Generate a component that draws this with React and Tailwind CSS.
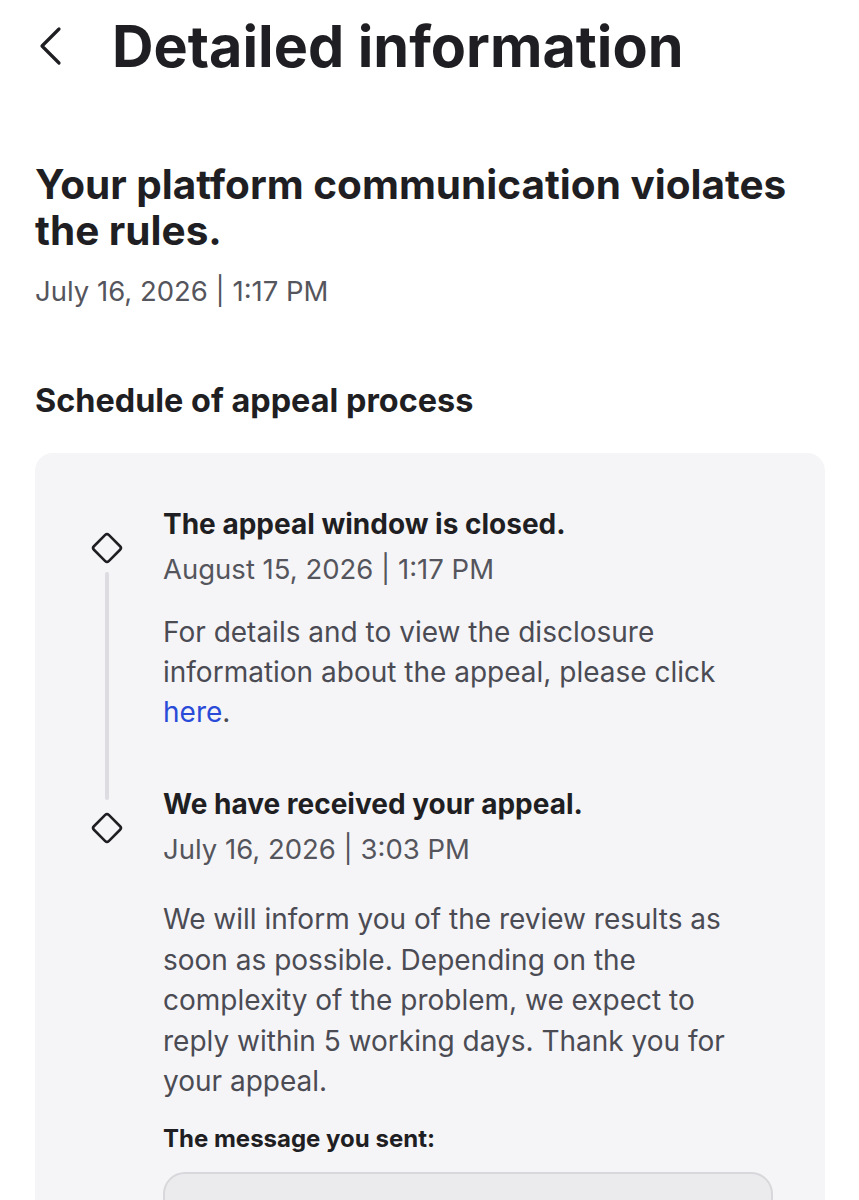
const font = { fontFamily: 'Inter, "Noto Sans", sans-serif' }

function Diamond() {
  return (
    <svg width="34" height="34" viewBox="0 0 34 34" className="shrink-0">
      <rect
        x="6.5"
        y="6.5"
        width="21"
        height="21"
        rx="2.5"
        transform="rotate(45 17 17)"
        fill="none"
        stroke="#1f1f23"
        strokeWidth="2.6"
      />
    </svg>
  )
}

function Step({ title, date, children, last }) {
  return (
    <div className="flex">
      <div className="w-[128px] shrink-0 flex">
        <div className="ml-[55px] w-[34px] flex flex-col items-center">
          <div className="mt-[25px]">
            <Diamond />
          </div>
          {!last && <div className="flex-1 w-[4px] rounded-full bg-[#dcdce1] mt-[7px] -mb-[14px]" />}
        </div>
      </div>
      <div className="flex-1 pr-[52px]">
        <div className="text-[28px] leading-[36px] font-bold text-[#1f1f23]">{title}</div>
        <div className="mt-[9px] text-[27.5px] leading-[36px] text-[#55555d]">{date}</div>
        {children}
      </div>
    </div>
  )
}

export default function App() {
  return (
    <div className="h-[1200px] overflow-hidden bg-white pl-[35px] pr-[34px]" style={font}>
      <header className="flex items-center h-[92px]">
        <svg width="30" height="40" viewBox="0 0 30 40" className="ml-[2px]">
          <path d="M22 3 L5 20 L22 37" fill="none" stroke="#1f1f23" strokeWidth="3.2" strokeLinecap="round" strokeLinejoin="round" />
        </svg>
        <h1 className="ml-[45px] text-[57.5px] leading-[60px] font-bold text-[#1f1f23]">Detailed information</h1>
      </header>

      <section className="mt-[70px]">
        <h2 className="text-[40.5px] leading-[46px] font-bold text-[#1f1f23]">
          Your platform communication violates the rules.
        </h2>
        <div className="mt-[20px] text-[27.5px] leading-[34px] text-[#55555d]">July 16, 2026 | 1:17 PM</div>
      </section>

      <h3 className="mt-[73px] text-[32.4px] leading-[40px] font-bold text-[#1f1f23]">Schedule of appeal process</h3>

      <div className="mt-[32px] bg-[#f5f5f7] rounded-[18px] pt-[53px] pb-[40px]">
        <Step title="The appeal window is closed." date="August 15, 2026 | 1:17 PM">
          <p className="mt-[25px] pr-[10px] pb-[54px] text-[28px] leading-[40px] text-[#4b4b54]">
            For details and to view the disclosure information about the appeal, please click{' '}
            <span className="text-[#2a4bd8]">here</span>.
          </p>
        </Step>
        <Step title="We have received your appeal." date="July 16, 2026 | 3:03 PM" last>
          <p className="mt-[32px] pr-[10px] text-[28px] leading-[40.5px] text-[#4b4b54]">
            We will inform you of the review results as soon as possible. Depending on the complexity of the
            problem, we expect to reply within 5 working days. Thank you for your appeal.
          </p>
          <div className="mt-[22px] text-[24px] leading-[30px] font-bold text-[#1f1f23]">The message you sent:</div>
          <div className="mt-[18px] h-[120px] rounded-[22px] bg-[#ebebee] border-2 border-[#d8d8dc]" />
        </Step>
      </div>
    </div>
  )
}
